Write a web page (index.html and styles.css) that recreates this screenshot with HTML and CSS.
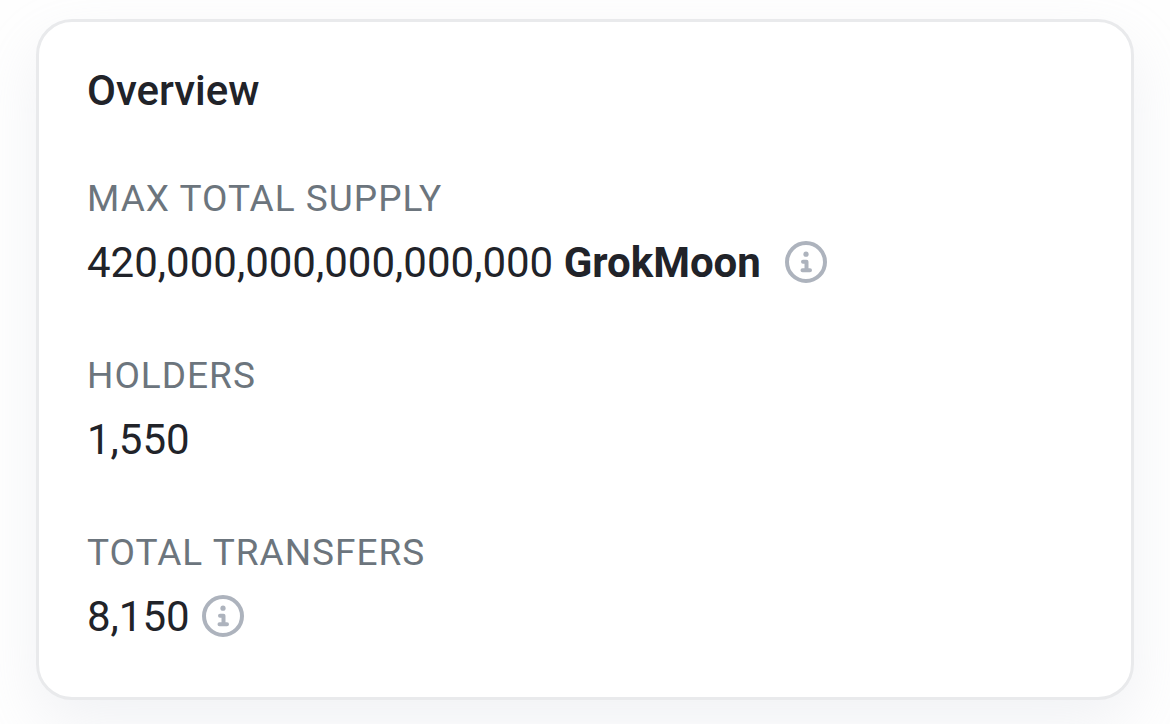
FILE: index.html
```html
<!DOCTYPE html>
<html lang="en">
<head>
  <meta charset="UTF-8" />
  <meta name="viewport" content="width=device-width, initial-scale=1.0"/>
  <title>GrokMoon Token</title>
  <link rel="stylesheet" href="styles.css">
</head>
<body>
  <section class="card">
    <h3 class="card-title">Overview</h3>

    <div class="item">
      <h4 class="item-label">Max Total Supply</h4>
      <div class="item-value supply">
        <span>420,000,000,000,000,000 <b>GrokMoon</b></span>
        <button type="button" class="info" aria-label="About max total supply">
          <svg viewBox="0 0 42 42" aria-hidden="true">
            <circle class="ring" cx="21" cy="21" r="19"/>
            <circle class="dot" cx="21" cy="13.2" r="2.6"/>
            <path class="stem" d="M18 20.8H21.5V29M17.5 29.2H25"/>
          </svg>
        </button>
      </div>
    </div>

    <div class="item">
      <h4 class="item-label">Holders</h4>
      <div class="item-value">1,550</div>
    </div>

    <div class="item">
      <h4 class="item-label">Total Transfers</h4>
      <div class="item-value">
        <span>8,150</span>
        <button type="button" class="info" aria-label="About total transfers">
          <svg viewBox="0 0 42 42" aria-hidden="true">
            <circle class="ring" cx="21" cy="21" r="19"/>
            <circle class="dot" cx="21" cy="13.2" r="2.6"/>
            <path class="stem" d="M18 20.8H21.5V29M17.5 29.2H25"/>
          </svg>
        </button>
      </div>
    </div>
  </section>
</body>
</html>
```
FILE: styles.css
```css
body {
  margin: 0;
  padding: 19px 36px 24px;
  background-color: #fefefe;
  color: #212329;
  font-family: Roboto, sans-serif;
}

.card {
  display: flex;
  flex-direction: column;
  gap: 49px;
  padding: 45px 48px 48px;
  border: 3px solid #e9eaec;
  border-radius: 36px;
  background-color: #fff;
  box-shadow: 0 24px 58px rgba(189, 197, 209, 0.2);
}

.card-title {
  margin: 0;
  padding-bottom: 3px;
  font-size: 42px;
  font-weight: 500;
  line-height: 48px;
}

.item-label {
  margin: 0;
  color: #6c757d;
  font-size: 37px;
  font-weight: 400;
  line-height: 64px;
  letter-spacing: 1px;
  text-transform: uppercase;
}

.item-value {
  display: flex;
  align-items: center;
  gap: 12px;
  font-size: 42px;
  line-height: 64px;
}

.supply {
  gap: 24px;
}

.info {
  display: flex;
  padding: 0 0 2px;
  border: none;
  background: none;
  cursor: pointer;
}

.info svg {
  width: 42px;
  height: 42px;
}

.ring {
  fill: none;
  stroke: #adb3bd;
  stroke-width: 4;
}

.dot {
  fill: #adb3bd;
}

.stem {
  fill: none;
  stroke: #adb3bd;
  stroke-width: 4;
  stroke-linecap: round;
  stroke-linejoin: round;
}
```
